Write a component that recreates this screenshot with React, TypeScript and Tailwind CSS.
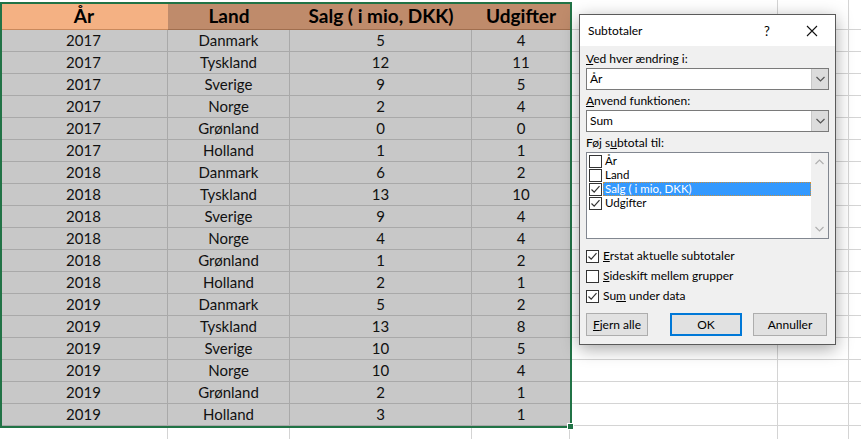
import React from "react";

const rows: [string, string, string, string][] = [
  ["2017", "Danmark", "5", "4"],
  ["2017", "Tyskland", "12", "11"],
  ["2017", "Sverige", "9", "5"],
  ["2017", "Norge", "2", "4"],
  ["2017", "Grønland", "0", "0"],
  ["2017", "Holland", "1", "1"],
  ["2018", "Danmark", "6", "2"],
  ["2018", "Tyskland", "13", "10"],
  ["2018", "Sverige", "9", "4"],
  ["2018", "Norge", "4", "4"],
  ["2018", "Grønland", "1", "2"],
  ["2018", "Holland", "2", "1"],
  ["2019", "Danmark", "5", "2"],
  ["2019", "Tyskland", "13", "8"],
  ["2019", "Sverige", "10", "5"],
  ["2019", "Norge", "10", "4"],
  ["2019", "Grønland", "2", "1"],
  ["2019", "Holland", "3", "1"],
];

const sheetFont = { fontFamily: "Lato, 'Liberation Sans', sans-serif" };
const uiFont = { fontFamily: "Lato, 'Noto Sans', sans-serif" };

function EmptyTail() {
  return (
    <>
      <div className="w-[208px] border-r border-b border-[#d4d4d4]" />
      <div className="w-[71px] border-r border-b border-[#d4d4d4]" />
      <div className="flex-1 border-b border-[#d4d4d4]" />
    </>
  );
}

function Check({ checked }: { checked: boolean }) {
  return (
    <div className="w-[13px] h-[13px] border border-[#333] bg-white flex items-center justify-center shrink-0">
      {checked && (
        <svg width="11" height="11" viewBox="0 0 11 11">
          <path d="M1.5 5.5 L4.2 8.2 L9.5 2.2" fill="none" stroke="#333" strokeWidth="1.2" />
        </svg>
      )}
    </div>
  );
}

function Chevron({ up = false, color = "#555" }: { up?: boolean; color?: string }) {
  return (
    <svg width="9" height="6" viewBox="0 0 9 6">
      <path d={up ? "M0.5 5 L4.5 1 L8.5 5" : "M0.5 1 L4.5 5 L8.5 1"} fill="none" stroke={color} strokeWidth="1.2" />
    </svg>
  );
}

function Combo({ value }: { value: string }) {
  return (
    <div className="h-[22px] border border-[#7a7a7a] bg-white flex">
      <div className="flex-1 pl-[3px] flex items-center text-black">{value}</div>
      <div className="w-[17px] bg-[#dcdcdc] border-l border-[#c8c8c8] flex items-center justify-center">
        <Chevron />
      </div>
    </div>
  );
}

function Dialog() {
  return (
    <div
      className="absolute left-[579px] top-[14px] w-[257px] h-[331px] border border-[#5a5a5a] bg-[#f0f0f0] shadow-[0_4px_16px_rgba(0,0,0,0.35)] flex flex-col text-black text-[12px] leading-[14px]"
      style={uiFont}
    >
      <div className="h-[31px] bg-white flex items-center pl-[8px] text-[12px]">
        <span className="flex-1">Subtotaler</span>
        <span className="w-[14px] text-[13px] mr-[32px] text-center">?</span>
        <svg width="12" height="12" viewBox="0 0 12 12" className="mr-[17px]">
          <path d="M1 1 L11 11 M11 1 L1 11" stroke="#111" strokeWidth="1.1" />
        </svg>
      </div>
      <div className="flex-1 px-[6px] pt-[6px]">
        <div className="h-[16px]"><u>V</u>ed hver ændring i:</div>
        <Combo value="År" />
        <div className="h-[16px] mt-[4px]"><u>A</u>nvend funktionen:</div>
        <Combo value="Sum" />
        <div className="h-[16px] mt-[4px]">Føj s<u>u</u>btotal til:</div>
        <div className="h-[87px] border border-[#828790] bg-white flex text-[11.5px]">
          <div className="flex-1 pt-[1px] pl-[1px]">
            {[
              ["År", false],
              ["Land", false],
              ["Salg ( i mio, DKK)", true],
              ["Udgifter", true],
            ].map(([label, checked], i) => (
              <div key={i} className="h-[14px] flex items-center">
                <div className="ml-[1px]"><Check checked={checked as boolean} /></div>
                {i === 2 ? (
                  <div className="flex-1 h-[14px] ml-[1px] bg-[#3399ff] text-white pl-[2px] outline-1 outline-dotted outline-[#c98f3d] -outline-offset-1 flex items-center">
                    {label as string}
                  </div>
                ) : (
                  <div className="ml-[3px]">{label as string}</div>
                )}
              </div>
            ))}
          </div>
          <div className="w-[17px] bg-[#f0f0f0] flex flex-col items-center justify-between py-[6px]">
            <Chevron up color="#b0b0b0" />
            <Chevron color="#b0b0b0" />
          </div>
        </div>
        <div className="mt-[10px] flex flex-col gap-[6px]">
          <div className="h-[14px] flex items-center gap-[4px]"><Check checked /><span><u>E</u>rstat aktuelle subtotaler</span></div>
          <div className="h-[14px] flex items-center gap-[4px]"><Check checked={false} /><span><u>S</u>ideskift mellem grupper</span></div>
          <div className="h-[14px] flex items-center gap-[4px]"><Check checked /><span>Su<u>m</u> under data</span></div>
        </div>
        <div className="mt-[10px] flex h-[23px]">
          <div className="w-[62px] border border-[#adadad] bg-[#e1e1e1] flex items-center justify-center"><span><u>F</u>jern alle</span></div>
          <div className="w-[72px] ml-[22px] border-2 border-[#0078d7] bg-[#e1e1e1] flex items-center justify-center">OK</div>
          <div className="w-[74px] ml-[11px] border border-[#adadad] bg-[#e1e1e1] flex items-center justify-center">Annuller</div>
        </div>
      </div>
    </div>
  );
}

export default function App() {
  return (
    <div className="relative w-[861px] h-[439px] overflow-hidden bg-white" style={sheetFont}>
      {/* partial row above header */}
      <div className="flex h-[3px]">
        <div className="w-[570px]" />
        <div className="w-[208px] border-r border-[#d4d4d4]" />
        <div className="w-[71px] border-r border-[#d4d4d4]" />
        <div className="flex-1" />
      </div>
      {/* header */}
      <div className="flex h-[27px] text-[19px] font-bold text-black">
        <div className="w-[168px] bg-[#f4b183] border-b border-[#c9895c] flex items-center justify-center">År</div>
        <div className="w-[122px] bg-[#bf8b6b] border-b border-[#a06e4e] flex items-center justify-center">Land</div>
        <div className="w-[182px] bg-[#bf8b6b] border-b border-[#a06e4e] flex items-center justify-center">Salg ( i mio, DKK)</div>
        <div className="w-[98px] bg-[#bf8b6b] border-b border-[#a06e4e] flex items-center justify-center">Udgifter</div>
        <EmptyTail />
      </div>
      {rows.map((r, i) => (
        <div key={i} className="flex h-[22px] text-[15px] text-[#111]">
          <div className="w-[168px] bg-[#c8c8c8] border-r border-b border-[#a9a9a9] flex items-center justify-center">{r[0]}</div>
          <div className="w-[122px] bg-[#c8c8c8] border-r border-b border-[#a9a9a9] flex items-center justify-center">{r[1]}</div>
          <div className="w-[182px] bg-[#c8c8c8] border-r border-b border-[#a9a9a9] flex items-center justify-center">{r[2]}</div>
          <div className="w-[98px] bg-[#c8c8c8] border-b border-[#a9a9a9] flex items-center justify-center">{r[3]}</div>
          <EmptyTail />
        </div>
      ))}
      <div className="flex h-[20px]">
        <div className="w-[168px] border-r border-[#d4d4d4]" />
        <div className="w-[122px] border-r border-[#d4d4d4]" />
        <div className="w-[182px] border-r border-[#d4d4d4]" />
        <div className="w-[98px] border-r border-[#d4d4d4]" />
        <div className="w-[208px] border-r border-[#d4d4d4]" />
        <div className="w-[71px] border-r border-[#d4d4d4]" />
      </div>

      {/* selection outline */}
      <div className="absolute left-0 top-[2px] w-[572px] h-[426px] border-2 border-[#217346] pointer-events-none" />
      <div className="absolute left-[567px] top-[423px] w-[7px] h-[7px] bg-[#217346] border border-white" />

      <Dialog />
    </div>
  );
}
